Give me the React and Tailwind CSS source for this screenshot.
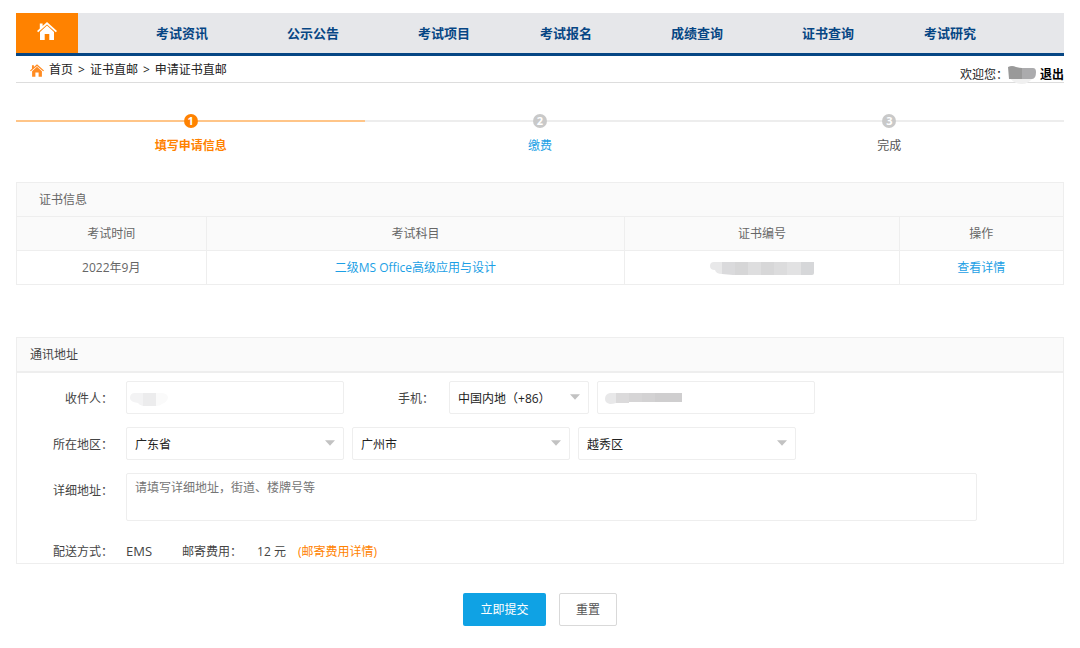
import React, { useState } from 'react';

const navItems = [
  { label: '考试资讯', grow: 'flex-[131]' },
  { label: '公示公告', grow: 'flex-[131]' },
  { label: '考试项目', grow: 'flex-[122]' },
  { label: '考试报名', grow: 'flex-[131]' },
  { label: '成绩查询', grow: 'flex-[131]' },
  { label: '证书查询', grow: 'flex-[122]' },
  { label: '考试研究', grow: 'flex-[140]' },
];

const steps = [
  { label: '填写申请信息', line: 'bg-[#ffc588]', dot: 'bg-[#ff8200]', text: 'text-[#ff8200] font-bold' },
  { label: '缴费', line: 'bg-[#ededed]', dot: 'bg-[#c9c9c9]', text: 'text-[#1c9fe5]' },
  { label: '完成', line: 'bg-[#ededed]', dot: 'bg-[#c9c9c9]', text: 'text-[#555555]' },
];

const HomeIcon = ({ className }) => (
  <svg className={className} viewBox="0 0 20 18" fill="currentColor" aria-hidden="true">
    <path d="M10 0 L20 9 L18.8 10.2 L10 2.5 L1.2 10.2 L0 9 L2.8 6.4 V1.6 H5.6 V3.9 Z" />
    <path d="M10 3.6 L17 9.9 V18 H12.3 V12 H7.7 V18 H3 V9.9 Z" />
  </svg>
);

// Mosaic strips that hide personal data
const NameMask = () => (
  <svg className="h-[18px] w-[28px]" viewBox="0 0 28 18" aria-hidden="true">
    <path d="M2 12 H25 Q20 18 14 18 Q6 18 2 12 Z" fill="#f0f0f0" />
    <path d="M0 1 Q4 -1 8 1 Q12 2 14 2 V13 H1 Z" fill="#999999" />
    <path d="M14 2 H25 Q28 2 28 6 Q28 13 24 13 H14 Z" fill="#ababad" />
  </svg>
);

const NumberMask = () => (
  <svg className="mx-auto mt-[2px] h-[13px] w-[104px]" viewBox="0 0 104 13" aria-hidden="true">
    <path d="M4 0 H12 V12 Q6 12 5 8 Q0 8 0 4 Q0 0 4 0 Z" fill="#e8e8e9" />
    <path d="M12 0 H25 V13 H23 L12 12 Z" fill="#dadadc" />
    <path d="M25 0 H38 V13 H25 Z" fill="#d6d6d7" />
    <path d="M38 0 H51 V13 H38 Z" fill="#dededf" />
    <path d="M51 0 H64 V13 H51 Z" fill="#d7d7d8" />
    <path d="M64 0 H77 V13 H64 Z" fill="#dcdcdd" />
    <path d="M77 0 H91 V13 H77 Z" fill="#e2e2e3" />
    <path d="M91 0 H104 V11 Q104 13 102 13 H91 Z" fill="#d6d7d9" />
  </svg>
);

const RecipientMask = () => (
  <svg className="pointer-events-none absolute left-1 top-[11px] h-[14px] w-[38px]" viewBox="0 0 38 14" aria-hidden="true">
    <path d="M5 1 H13 V14 Q9 13 8 11 Q0 10 0 6 Q0 1 5 1 Z" fill="#f3f3f4" />
    <path d="M13 1 H26 V14 H13 Z" fill="#ececed" />
    <path d="M26 1 H33 Q38 2 38 6 Q37 10 32 12 Q30 14 26 14 Z" fill="#fafafa" />
  </svg>
);

const PhoneMask = () => (
  <svg className="pointer-events-none absolute left-2 top-3 h-[11px] w-[77px]" viewBox="0 0 77 11" aria-hidden="true">
    <path d="M5 0 H11 V10 Q8 11 5 11 Q0 10 0 6 Q0 1 5 0 Z" fill="#e8e8e9" />
    <path d="M11 0 H24 V10 H11 Z" fill="#dbdadb" />
    <path d="M24 0 H37 V9 H24 Z" fill="#d6d5d6" />
    <path d="M37 0 H50 V9 H37 Z" fill="#d3d2d3" />
    <path d="M50 0 H77 V9 H50 Z" fill="#cfcecf" />
  </svg>
);

const fieldBox = 'h-[33px] w-full rounded-xs border border-[#eeeeee] bg-white px-2 outline-none';

const SelectField = ({ id, label, options, width }) => (
  <div className={`relative ${width}`}>
    <select id={id} aria-label={label} className={`${fieldBox} appearance-none pt-[2px] text-[#222222]`}>
      {options.map((option) => (
        <option key={option}>{option}</option>
      ))}
    </select>
    <svg className="pointer-events-none absolute right-[9px] top-[13px] h-[6px] w-[10px]" viewBox="0 0 11 6" aria-hidden="true">
      <path d="M0 0 H11 L5.5 6 Z" fill="#c2c2c2" />
    </svg>
  </div>
);

const Label = ({ htmlFor, children }) => (
  <label htmlFor={htmlFor} className="w-[96px] shrink-0 text-right leading-9">
    {children}
  </label>
);

const Header = () => (
  <header>
    <nav className="flex h-[43px] border-b-3 border-[#064684] bg-[#e6e7ea] text-[13px] font-bold text-[#064684]">
      <a href="#" aria-label="首页" className="flex w-[62px] shrink-0 items-center justify-center bg-[#ff8200] pb-1 text-white">
        <HomeIcon className="h-[18px] w-5" />
      </a>
      <span className="flex-[78]" />
      {navItems.map((item) => (
        <a key={item.label} href="#" className={`${item.grow} whitespace-nowrap leading-10`}>
          {item.label}
        </a>
      ))}
    </nav>
    <div className="flex h-[27px] items-start justify-between border-b border-[#dddddd] text-[#222222]">
      <div className="flex items-center gap-[5px] pl-[14px] leading-7">
        <HomeIcon className="h-[13px] w-[14px] text-[#ff8b22]" />
        <a href="#">首页</a>
        <span>&gt;</span>
        <a href="#">证书直邮</a>
        <span>&gt;</span>
        <span>申请证书直邮</span>
      </div>
      <div className="flex pt-[10px] leading-[18px]">
        <span>欢迎您：</span>
        <NameMask />
        <a href="#" className="ml-1 font-bold text-black">退出</a>
      </div>
    </div>
  </header>
);

const Steps = () => (
  <ol className="mt-[31px] flex">
    {steps.map((step, index) => (
      <li key={step.label} className="flex-1 text-center">
        <div className="flex items-center">
          <span className={`h-[2px] flex-1 ${step.line}`} />
          <span className={`size-[14px] rounded-full text-[11px] leading-[14px] font-bold text-white ${step.dot}`}>
            {index + 1}
          </span>
          <span className={`h-[2px] flex-1 ${step.line}`} />
        </div>
        <p className={`mt-2 leading-5 ${step.text}`}>{step.label}</p>
      </li>
    ))}
  </ol>
);

const CertificateTable = () => (
  <table className="mt-[26px] w-full table-fixed border-collapse text-center text-[#666666] [&_td]:border [&_td]:border-[#eeeeee] [&_th]:border [&_th]:border-[#eeeeee] [&_th]:font-normal">
    <colgroup>
      <col className="w-[18.1%]" />
      <col className="w-[40%]" />
      <col className="w-[26.2%]" />
      <col className="w-[15.7%]" />
    </colgroup>
    <thead className="bg-[#fafafa]">
      <tr className="h-[34px]">
        <th colSpan={4} className="pl-[22px] text-left">证书信息</th>
      </tr>
      <tr className="h-[34px]">
        <th>考试时间</th>
        <th>考试科目</th>
        <th>证书编号</th>
        <th>操作</th>
      </tr>
    </thead>
    <tbody>
      <tr className="h-[34px]">
        <td>2022年9月</td>
        <td><a href="#" className="text-[#1c9fe5]">二级MS Office高级应用与设计</a></td>
        <td><NumberMask /></td>
        <td><a href="#" className="text-[#1c9fe5]">查看详情</a></td>
      </tr>
    </tbody>
  </table>
);

const AddressForm = () => {
  const [recipient, setRecipient] = useState('');
  const [phone, setPhone] = useState('');
  const [address, setAddress] = useState('');

  const handleReset = () => {
    setRecipient('');
    setPhone('');
    setAddress('');
  };

  return (
    <form onSubmit={(e) => e.preventDefault()} onReset={handleReset} className="mt-[52px]">
      <section className="border border-[#eeeeee] text-[#444444]">
        <h2 className="h-[35px] border-b-2 border-[#eeeeee] bg-[#fafafa] pl-[13px] leading-[34px]">通讯地址</h2>
        <div className="flex flex-col gap-[13px] pt-2">
          <div className="flex h-[33px]">
            <Label htmlFor="recipient">收件人：</Label>
            <div className="relative ml-[13px] w-[218px]">
              <input id="recipient" type="text" value={recipient} onChange={(e) => setRecipient(e.target.value)} className={fieldBox} />
              {!recipient && <RecipientMask />}
            </div>
            <label htmlFor="phone" className="ml-[54px] leading-9">手机：</label>
            <div className="ml-[15px] flex gap-2">
              <SelectField id="area-code" label="国家和地区代码" options={['中国内地（+86）']} width="w-[140px]" />
              <div className="relative w-[218px]">
                <input id="phone" type="tel" value={phone} onChange={(e) => setPhone(e.target.value)} className={fieldBox} />
                {!phone && <PhoneMask />}
              </div>
            </div>
          </div>
          <div className="flex h-[33px]">
            <Label htmlFor="province">所在地区：</Label>
            <div className="ml-[13px] flex gap-2">
              <SelectField id="province" label="省" options={['广东省']} width="w-[218px]" />
              <SelectField id="city" label="市" options={['广州市']} width="w-[218px]" />
              <SelectField id="district" label="区" options={['越秀区']} width="w-[218px]" />
            </div>
          </div>
          <div className="flex">
            <Label htmlFor="address">详细地址：</Label>
            <textarea
              id="address"
              value={address}
              onChange={(e) => setAddress(e.target.value)}
              placeholder="请填写详细地址，街道、楼牌号等"
              className="mr-[86px] ml-[13px] h-[48px] flex-1 resize-none rounded-xs border border-[#eeeeee] px-2 py-1 leading-5 outline-none placeholder:text-[#757575]"
            />
          </div>
          <div className="flex h-[29px] items-baseline leading-[34px]">
            <span className="w-[96px] text-right">配送方式：</span>
            <span className="ml-[13px] text-[13px]">EMS</span>
            <span className="ml-[30px]">邮寄费用：</span>
            <span className="ml-[15px]">12 元</span>
            <a href="#" className="ml-3 text-[#ff8200]">(邮寄费用详情)</a>
          </div>
        </div>
      </section>
      <div className="mt-[29px] flex justify-center gap-[13px]">
        <button type="submit" className="h-[33px] w-[83px] rounded-xs bg-[#0fa2e4] text-white">立即提交</button>
        <button type="reset" className="h-[33px] w-[58px] rounded-xs border border-[#d9d9d9] bg-white text-[#555555]">重置</button>
      </div>
    </form>
  );
};

const App = () => (
  <main className="bg-white px-4 pt-[13px] pb-5 font-['Open_Sans','Noto_Sans_CJK_SC',sans-serif] text-xs">
    <Header />
    <Steps />
    <CertificateTable />
    <AddressForm />
  </main>
);

export default App;
